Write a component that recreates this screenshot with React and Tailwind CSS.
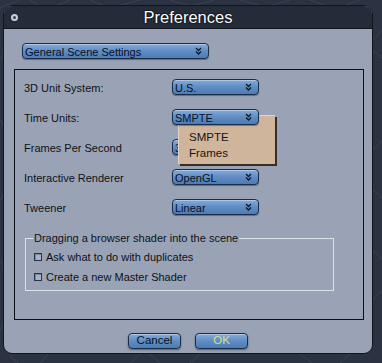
import React from "react";

function Chevrons() {
  return (
    <svg width="7" height="8" viewBox="0 0 7 8" className="shrink-0">
      <path d="M1 1 L3.5 3.5 L6 1" stroke="#0b1626" strokeWidth="1.3" fill="none" />
      <path d="M1 4.5 L3.5 7 L6 4.5" stroke="#0b1626" strokeWidth="1.3" fill="none" />
    </svg>
  );
}

function Select({ value, className = "" }) {
  return (
    <div
      className={
        "h-[16px] rounded-[4px] border border-[#1a2d48] bg-gradient-to-b from-[#86acdb] via-[#5f8cc3] to-[#4d7bb3] shadow-[inset_0_1px_0_rgba(255,255,255,0.35),0_1px_1px_rgba(0,0,0,0.35)] flex items-center justify-between pl-[2px] pr-[6px] " +
        className
      }
    >
      <span className="text-[11px] leading-none text-[#07111f] mt-[3px]">{value}</span>
      <Chevrons />
    </div>
  );
}

function Row({ label, value, top }) {
  return (
    <div className="flex items-center h-[16px]">
      <div className="w-[148px] text-[11px] text-[#0d1116] mt-[2px]">{label}</div>
      <Select value={value} className={"w-[87px]" + (top ? " relative z-20" : "")} />
    </div>
  );
}

function Check({ label }) {
  return (
    <div className="flex items-center h-[10px]">
      <div className="w-[8px] h-[8px] border border-[#2a3448] bg-[#a9b2c4] shadow-[inset_1px_1px_0_rgba(0,0,0,0.25)]" />
      <span className="ml-[4px] text-[11px] text-[#0d1116]">{label}</span>
    </div>
  );
}

export default function App() {
  return (
    <div
      className="relative w-[382px] h-[363px] overflow-hidden bg-[#2b3343]"
      style={{ fontFamily: '"Liberation Sans", Arial, sans-serif' }}
    >
      <svg className="absolute inset-0" width="382" height="363" viewBox="0 0 382 363">
        <g stroke="#4a5366" strokeWidth="0.8" fill="none" opacity="0.6">
          <path d="M0 8 L20 0 M30 0 L45 10 L70 0 M90 0 L110 8 L140 0 M170 0 L190 6 L215 0 M240 0 L265 7 L290 0 M310 0 L335 9 L360 0" />
          <path d="M373 40 L382 30 M373 50 L382 58 M373 150 L382 140 M373 190 L382 198 M373 250 L382 260 M373 300 L382 290" />
          <path d="M0 60 L3 55 M0 120 L3 125 M0 200 L3 195 M0 260 L3 265 M0 330 L3 326" />
          <path d="M10 356 L18 363 M40 363 L48 354 M130 363 L140 354 M150 354 L160 363 M190 363 L200 354 M300 354 L312 363 M340 363 L350 354" />
        </g>
      </svg>
      <div className="relative ml-[3px] mt-[5px] w-[370px] h-[349px] rounded-[9px] border border-[#11151c] bg-[#9aa3b6] overflow-hidden flex flex-col">
        <div className="h-[23px] bg-[#242c3a] border-b border-[#11151c] relative flex items-center justify-center shrink-0">
          <div className="absolute left-[7px] top-[8px] w-[7px] h-[7px] rounded-full border-[2px] border-[#c9ced6] bg-[#3a4252]" />
          <span
            className="text-[16.5px] text-white leading-none"
            style={{ textShadow: "0 0 2px #000, 0 0 1px #000" }}
          >
            Preferences
          </span>
        </div>
        <div className="flex flex-col px-[10px] pt-[14px]">
          <Select value="General Scene Settings" className="ml-[8px] w-[187px]" />
          <div className="mt-[10px] w-[350px] h-[251px] border border-[#0c0f14] flex flex-col pl-[9px] pt-[9px]">
            <div className="flex flex-col gap-[14px]">
              <Row label="3D Unit System:" value="U.S." />
              <Row label="Time Units:" value="SMPTE" top />
              <Row label="Frames Per Second" value="30" />
              <Row label="Interactive Renderer" value="OpenGL" />
              <Row label="Tweener" value="Linear" />
            </div>
            <div className="relative mt-[23px] ml-[1px] w-[309px] h-[53px] border border-[#dde2ea] flex flex-col pl-[8px] pt-[13px] gap-[10px]">
              <span className="absolute left-[7px] top-[-8px] px-[1px] bg-[#9aa3b6] text-[11px] leading-[14px] text-[#0d1116]">
                Dragging a browser shader into the scene
              </span>
              <Check label="Ask what to do with duplicates" />
              <Check label="Create a new Master Shader" />
            </div>
          </div>
          <div className="flex justify-center gap-[14px] mt-[13px]">
            <button className="w-[53px] h-[16px] rounded-[4px] border border-[#1a2d48] bg-gradient-to-b from-[#86acdb] via-[#5f8cc3] to-[#4d7bb3] shadow-[inset_0_1px_0_rgba(255,255,255,0.35),0_1px_2px_rgba(0,0,0,0.45)] text-[11.5px] leading-none text-[#07111f] flex items-center justify-center">
              Cancel
            </button>
            <button className="w-[53px] h-[16px] rounded-[4px] border border-[#1a2d48] bg-gradient-to-b from-[#86acdb] via-[#5f8cc3] to-[#4d7bb3] shadow-[inset_0_1px_0_rgba(255,255,255,0.35),0_1px_2px_rgba(0,0,0,0.45)] text-[11.5px] leading-none text-[#d6e08a] flex items-center justify-center">
              OK
            </button>
          </div>
        </div>
      </div>
      <div className="absolute z-10 left-[178px] top-[115px] w-[97px] h-[49px] bg-[#cfb59c] border-t border-l border-[#e6d3bf] shadow-[2px_2px_0_#3a2e24] flex flex-col pl-[10px] pt-[15px] gap-[3px]">
        <span className="text-[11.5px] leading-[13px] text-[#1a1410]">SMPTE</span>
        <span className="text-[11.5px] leading-[13px] text-[#1a1410]">Frames</span>
      </div>
    </div>
  );
}
